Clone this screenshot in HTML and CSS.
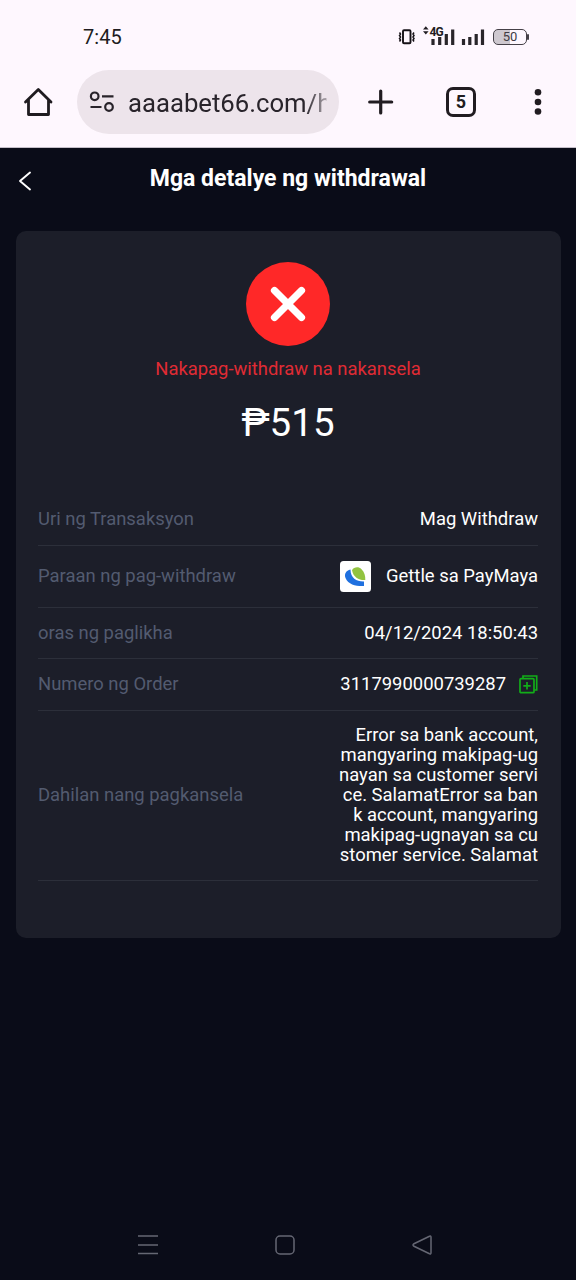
FILE: index.html
```html
<!DOCTYPE html>
<html lang="fil">
<head>
<meta charset="utf-8">
<title>Mga detalye ng withdrawal</title>
<link rel="stylesheet" href="styles.css">
</head>
<body>
<div class="screen">
  <div class="status">
    <span class="clock">7:45</span>
    <svg class="signals" width="94" height="24" viewBox="0 0 94 24">
      <rect x="5" y="5.300" width="7.500" height="13" rx="1" fill="none" stroke="#151116" stroke-width="1.900"/>
      <path d="M1.500 7.500l1 1.500-1 1.500 1 1.500-1 1.500 1 1.500-1 1.500M16 7.500l-1 1.500 1 1.500-1 1.500 1 1.500-1 1.500 1 1.500" fill="none" stroke="#151116" stroke-width="1.500"/>
      <path d="M25 4.500l2.800-3.300 2.800 3.300zM25 6.300l2.800 3.200 2.800-3.200z" fill="#211d22"/>
      <path d="M35 14v6M41.700 12v8M48.300 9v11M54.700 4.500V20M65.500 14v6M71.800 12v8M78.200 9v11M84.500 4.500V20" fill="none" stroke="#29252a" stroke-width="3.200"/>
      <text x="31.500" y="11" class="network">4G</text>
    </svg>
    <div class="battery">50</div>
  </div>
  <div class="browser">
    <svg class="home" width="32" height="32" viewBox="0 0 32 32" fill="none" stroke="#1f1b20" stroke-width="2.800" stroke-linecap="round" stroke-linejoin="round">
      <path d="M3.500 16L16.300 3.500 29 16M6.500 14v14.500h20V14"/>
    </svg>
    <div class="address">
      <svg width="26" height="22" viewBox="0 0 26 22" fill="none" stroke="#28232a" stroke-width="2.200">
        <circle cx="5.700" cy="5.300" r="3.800"/><path d="M13 5.300h11.500M1.500 16h11"/><circle cx="20" cy="16" r="3.800"/>
      </svg>
      <span class="url">aaaabet66.com/h</span>
    </div>
    <svg class="plus" width="28" height="28" viewBox="0 0 28 28" stroke="#211c21" stroke-width="3.200" stroke-linecap="round"><path d="M13.700 3v22M2.700 14h22"/></svg>
    <div class="tabs">5</div>
    <svg class="more" width="8" height="28" viewBox="0 0 8 28" fill="#211c21"><circle cx="4" cy="4.300" r="3.300"/><circle cx="4" cy="14" r="3.300"/><circle cx="4" cy="23.500" r="3.300"/></svg>
  </div>
  <header class="header">
    <svg class="back" width="16" height="22" viewBox="0 0 16 22" fill="none" stroke="#fff" stroke-width="1.900" stroke-linecap="round" stroke-linejoin="round"><path d="M13 2.500L3 11l10 8.500"/></svg>
    <h1 class="title">Mga detalye ng withdrawal</h1>
  </header>
  <main class="card">
    <svg class="cancelled" width="84" height="84" viewBox="0 0 84 84"><circle cx="42" cy="42" r="42" fill="#ff2828"/><path d="M28.500 28.500l27 27M55.500 28.500l-27 27" stroke="#fff" stroke-width="7.200" stroke-linecap="round"/></svg>
    <p class="state">Nakapag-withdraw na nakansela</p>
    <p class="amount">₱515</p>
    <div class="row"><span class="label">Uri ng Transaksyon</span><span class="value">Mag Withdraw</span></div>
    <div class="row method"><span class="label">Paraan ng pag-withdraw</span><span class="value">
      <svg class="wallet" width="31" height="31" viewBox="0 0 31 31"><rect width="31" height="31" rx="3.500" fill="#fff"/><path d="M10.500 8.500C6 9.500 4 13 5.500 17c3 7 11 8.300 18.500 8v-4.500c-7 .3-13.500-3-13.500-12z" fill="#1f70df"/><path d="M12 9.200C14 6 18.500 5.300 21.500 8.200c3 2.800 4 6.800 3.800 10.800-5.800.5-12-2.500-13.300-9.800z" fill="#92c340"/></svg>
      Gettle sa PayMaya</span></div>
    <div class="row"><span class="label">oras ng paglikha</span><span class="value">04/12/2024 18:50:43</span></div>
    <div class="row"><span class="label">Numero ng Order</span><span class="value order">3117990000739287
      <svg width="19" height="19" viewBox="0 0 19 19" fill="none" stroke="#12ad19" stroke-width="1.700"><rect x="1" y="3.700" width="14" height="14" rx="1"/><path d="M4 3.700V1h13.700v14H15M8 7v7.500M4.300 10.800h7.400"/></svg></span></div>
    <div class="row reason"><span class="label">Dahilan nang pagkansela</span><span class="value">Error sa bank account,<br>mangyaring makipag-ug<br>nayan sa customer servi<br>ce. SalamatError sa ban<br>k account, mangyaring<br>makipag-ugnayan sa cu<br>stomer service. Salamat</span></div>
  </main>
  <nav class="navigation">
    <svg width="22" height="22" viewBox="0 0 22 22"><path d="M1 2h20M1 11h20M1 19.500h20"/></svg>
    <svg width="22" height="22" viewBox="0 0 22 22"><rect x="2" y="2" width="18" height="18" rx="4"/></svg>
    <svg width="22" height="22" viewBox="0 0 22 22"><path d="M18.500 2.200L3 9.700q-2 1.300 0 2.600l15.500 7.500q1.500.5 1.500-1V3.200q0-1.500-1.500-1z"/></svg>
  </nav>
</div>
</body>
</html>
```

FILE: styles.css
```css
* { box-sizing: border-box; }
body { margin: 0; font-family: Roboto, "Noto Sans", sans-serif; background: #0a0c18; }
p, h1 { margin: 0; }
svg { display: block; flex: none; }
.screen { width: 576px; height: 1280px; display: flex; flex-direction: column; overflow: hidden; }
.status { height: 68px; padding: 5px 47px 0 83px; display: flex; align-items: center; background: #fef7fe; color: #201c21; }
.clock { font-size: 20px; letter-spacing: .1px; }
.signals { margin-left: auto; }
.network { font: bold 12px Roboto, sans-serif; fill: #211d22; stroke: #fef7fe; stroke-width: 1.500px; paint-order: stroke; letter-spacing: -.9px; }
.battery { position: relative; width: 34px; height: 16px; margin: 0 2px 0 1px; border: 1.500px solid #454047; border-radius: 5px; background: linear-gradient(90deg, #cec8cf 50%, #fef7fe 50%); font-size: 13px; line-height: 14px; text-align: center; color: #403b43; }
.battery::after { content: ""; position: absolute; right: -3px; top: 4px; width: 2px; height: 6px; background: #454047; border-radius: 1px; }
.signals, .battery { flex: none; }
.browser { height: 80px; padding: 2px 35px 14px 22px; display: flex; align-items: center; background: #fef7fe; border-bottom: 1px solid #c5bfc9; }
.address { margin-left: 23px; width: 262px; height: 64px; border-radius: 32px; background: #ede4eb; padding: 0 10px 0 12px; display: flex; align-items: center; gap: 13px; }
.url { width: 201px; padding-top: 2px; white-space: nowrap; color: #29242b; font-size: 25.700px; mask-image: linear-gradient(90deg, #000 88%, rgba(0, 0, 0, .35) 98.500%, transparent 99%); }
.plus { margin-left: 28px; }
.tabs { margin-left: 51px; width: 30px; height: 30px; border: 3px solid #211c21; border-radius: 7px; font-size: 18px; font-weight: 700; line-height: 24px; text-align: center; color: #211c21; }
.more { margin-left: auto; margin-right: -1px; }
.header { height: 83px; padding: 14px 17px 0; display: grid; grid-template-columns: 16px 1fr 16px; align-items: start; }
.back { margin-top: 8px; }
.title { color: #fff; font-size: 23px; line-height: 34px; font-weight: 700; text-align: center; white-space: nowrap; }
.card { margin: 0 15.500px; height: 707px; padding: 31px 22.500px 0; border-radius: 10px; background: #1c1e29; display: flex; flex-direction: column; }
.cancelled { align-self: center; }
.state { margin-top: 11px; line-height: 24px; text-align: center; color: #e02b34; font-size: 18.400px; }
.amount { margin-top: 18px; height: 95px; line-height: 48px; text-align: center; color: #fff; font-size: 38.500px; }
.row { height: 51.500px; flex: none; display: flex; justify-content: space-between; align-items: center; border-bottom: 1px solid #2c2f3a; font-size: 18.430px; line-height: 20.100px; white-space: nowrap; }
.method { height: 62px; }
.reason { height: 170.500px; }
.label { color: #535b70; }
.value { color: #fff; text-align: right; display: flex; align-items: center; gap: 15px; }
.reason .value { display: block; }
.order { gap: 13px; }
.navigation { margin-top: auto; height: 70px; padding: 0 143px 0 137px; display: flex; align-items: center; justify-content: space-between; fill: none; stroke: #656773; stroke-width: 1.500; }
```
